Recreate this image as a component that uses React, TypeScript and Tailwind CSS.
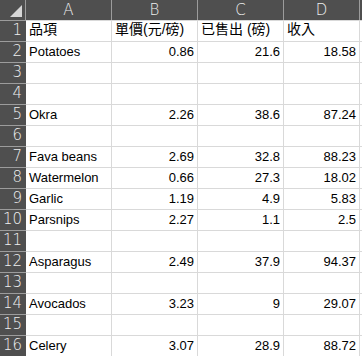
import React from "react";

const cols = ["A", "B", "C", "D"];

const rows: string[][] = [
  ["品項", "單價(元/磅)", "已售出 (磅)", "收入"],
  ["Potatoes", "0.86", "21.6", "18.58"],
  [],
  [],
  ["Okra", "2.26", "38.6", "87.24"],
  [],
  ["Fava beans", "2.69", "32.8", "88.23"],
  ["Watermelon", "0.66", "27.3", "18.02"],
  ["Garlic", "1.19", "4.9", "5.83"],
  ["Parsnips", "2.27", "1.1", "2.5"],
  [],
  ["Asparagus", "2.49", "37.9", "94.37"],
  [],
  ["Avocados", "3.23", "9", "29.07"],
  [],
  ["Celery", "3.07", "28.9", "88.72"],
];

const font = { fontFamily: '"Liberation Sans", "Noto Sans CJK TC", sans-serif' };
const headFont = { fontFamily: '"DejaVu Sans", sans-serif' };

export default function App() {
  return (
    <div className="w-[362px] h-[357px] overflow-hidden bg-white" style={font}>
      <div className="grid grid-cols-[26px_86px_86px_86px_76px_40px]">
        {/* header row */}
        <div className="h-[20px] bg-[#4f4f4f] border-r border-[#9c9c9c] relative">
          <div className="absolute right-[3px] bottom-[3px] w-0 h-0 border-l-[12px] border-l-transparent border-b-[12px] border-b-[#d6d6d6]" />
        </div>
        {cols.map((c) => (
          <div
            key={c}
            style={headFont}
            className="h-[20px] bg-[#4f4f4f] border-r border-[#9c9c9c] text-[#f0f0f0] text-[15px] font-extralight flex items-center justify-center"
          >
            {c}
          </div>
        ))}
        <div className="h-[20px] bg-[#4f4f4f]" />

        {rows.map((r, i) => (
          <React.Fragment key={i}>
            <div
              style={headFont}
              className="h-[21px] bg-[#4f4f4f] border-t border-[#9c9c9c] text-[#f0f0f0] text-[15px] font-extralight flex items-end justify-end pr-[4px]"
            >
              {i + 1}
            </div>
            {[0, 1, 2, 3].map((j) => (
              <div
                key={j}
                className={`h-[21px] border-t border-r border-[#d9d9d9] text-black flex items-end pb-[1px] whitespace-nowrap ${
                  i === 0 ? "text-[14px]" : "text-[13px]"
                } ${i === 0 || j === 0 ? "justify-start pl-[3px]" : "justify-end pr-[3px]"}`}
              >
                {r[j] ?? ""}
              </div>
            ))}
            <div className="h-[21px] border-t border-[#d9d9d9]" />
          </React.Fragment>
        ))}
      </div>
    </div>
  );
}
